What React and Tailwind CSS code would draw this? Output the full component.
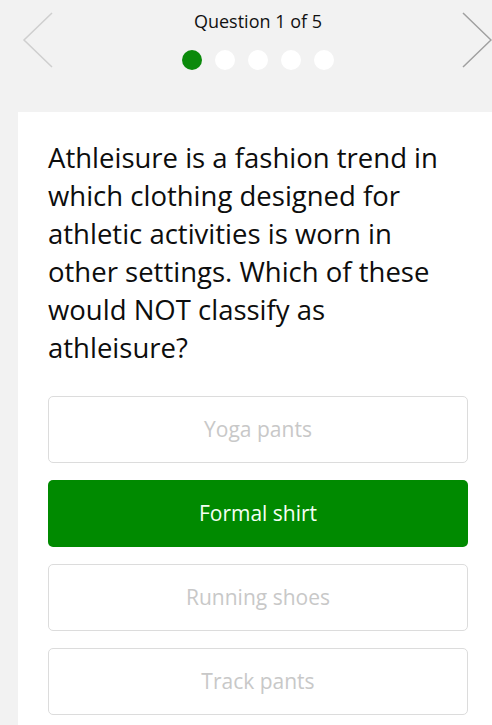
export default function App() {
  const options = ["Yoga pants", "Formal shirt", "Running shoes", "Track pants"];
  return (
    <div className="w-[492px] h-[725px] overflow-hidden bg-[#f2f2f2] flex flex-col" style={{ fontFamily: '"Open Sans", "Noto Sans", sans-serif' }}>
      <div className="relative h-[112px] shrink-0">
        <svg className="absolute left-[22px] top-[12px]" width="32" height="56" viewBox="0 0 32 56">
          <polyline points="30,1 2,28 30,55" fill="none" stroke="#cfcfcf" strokeWidth="1.5" />
        </svg>
        <svg className="absolute left-[461px] top-[12px]" width="32" height="56" viewBox="0 0 32 56">
          <polyline points="2,1 30,28 2,55" fill="none" stroke="#a0a0a0" strokeWidth="1.5" />
        </svg>
        <div className="flex flex-col items-center pl-[24px] pt-[8px]">
          <div className="text-[18px] leading-[26px] text-[#111]">Question 1 of 5</div>
          <div className="flex gap-[13px] mt-[16px]">
            <div className="w-[20px] h-[20px] rounded-full bg-[#0b8a0b]" />
            <div className="w-[20px] h-[20px] rounded-full bg-white" />
            <div className="w-[20px] h-[20px] rounded-full bg-white" />
            <div className="w-[20px] h-[20px] rounded-full bg-white" />
            <div className="w-[20px] h-[20px] rounded-full bg-white" />
          </div>
        </div>
      </div>
      <div className="flex-1 ml-[18px] bg-white pl-[30px] pr-[24px] pt-[27px]">
        <p className="text-[27.5px] leading-[38px] text-[#0d0d0d] pr-[10px]">
          Athleisure is a fashion trend in which clothing designed for athletic activities is worn in other settings. Which of these would NOT classify as athleisure?
        </p>
        <div className="flex flex-col gap-[17px] mt-[29px]">
          {options.map((o, i) =>
            i === 1 ? (
              <div key={o} className="h-[67px] rounded-[5px] bg-[#008a00] flex items-center justify-center text-[21px] text-[#f4fff4]">
                {o}
              </div>
            ) : (
              <div key={o} className="h-[67px] rounded-[5px] border border-[#dcdcdc] bg-white flex items-center justify-center text-[21px] text-[#c8c8c8]">
                {o}
              </div>
            )
          )}
        </div>
      </div>
    </div>
  );
}
